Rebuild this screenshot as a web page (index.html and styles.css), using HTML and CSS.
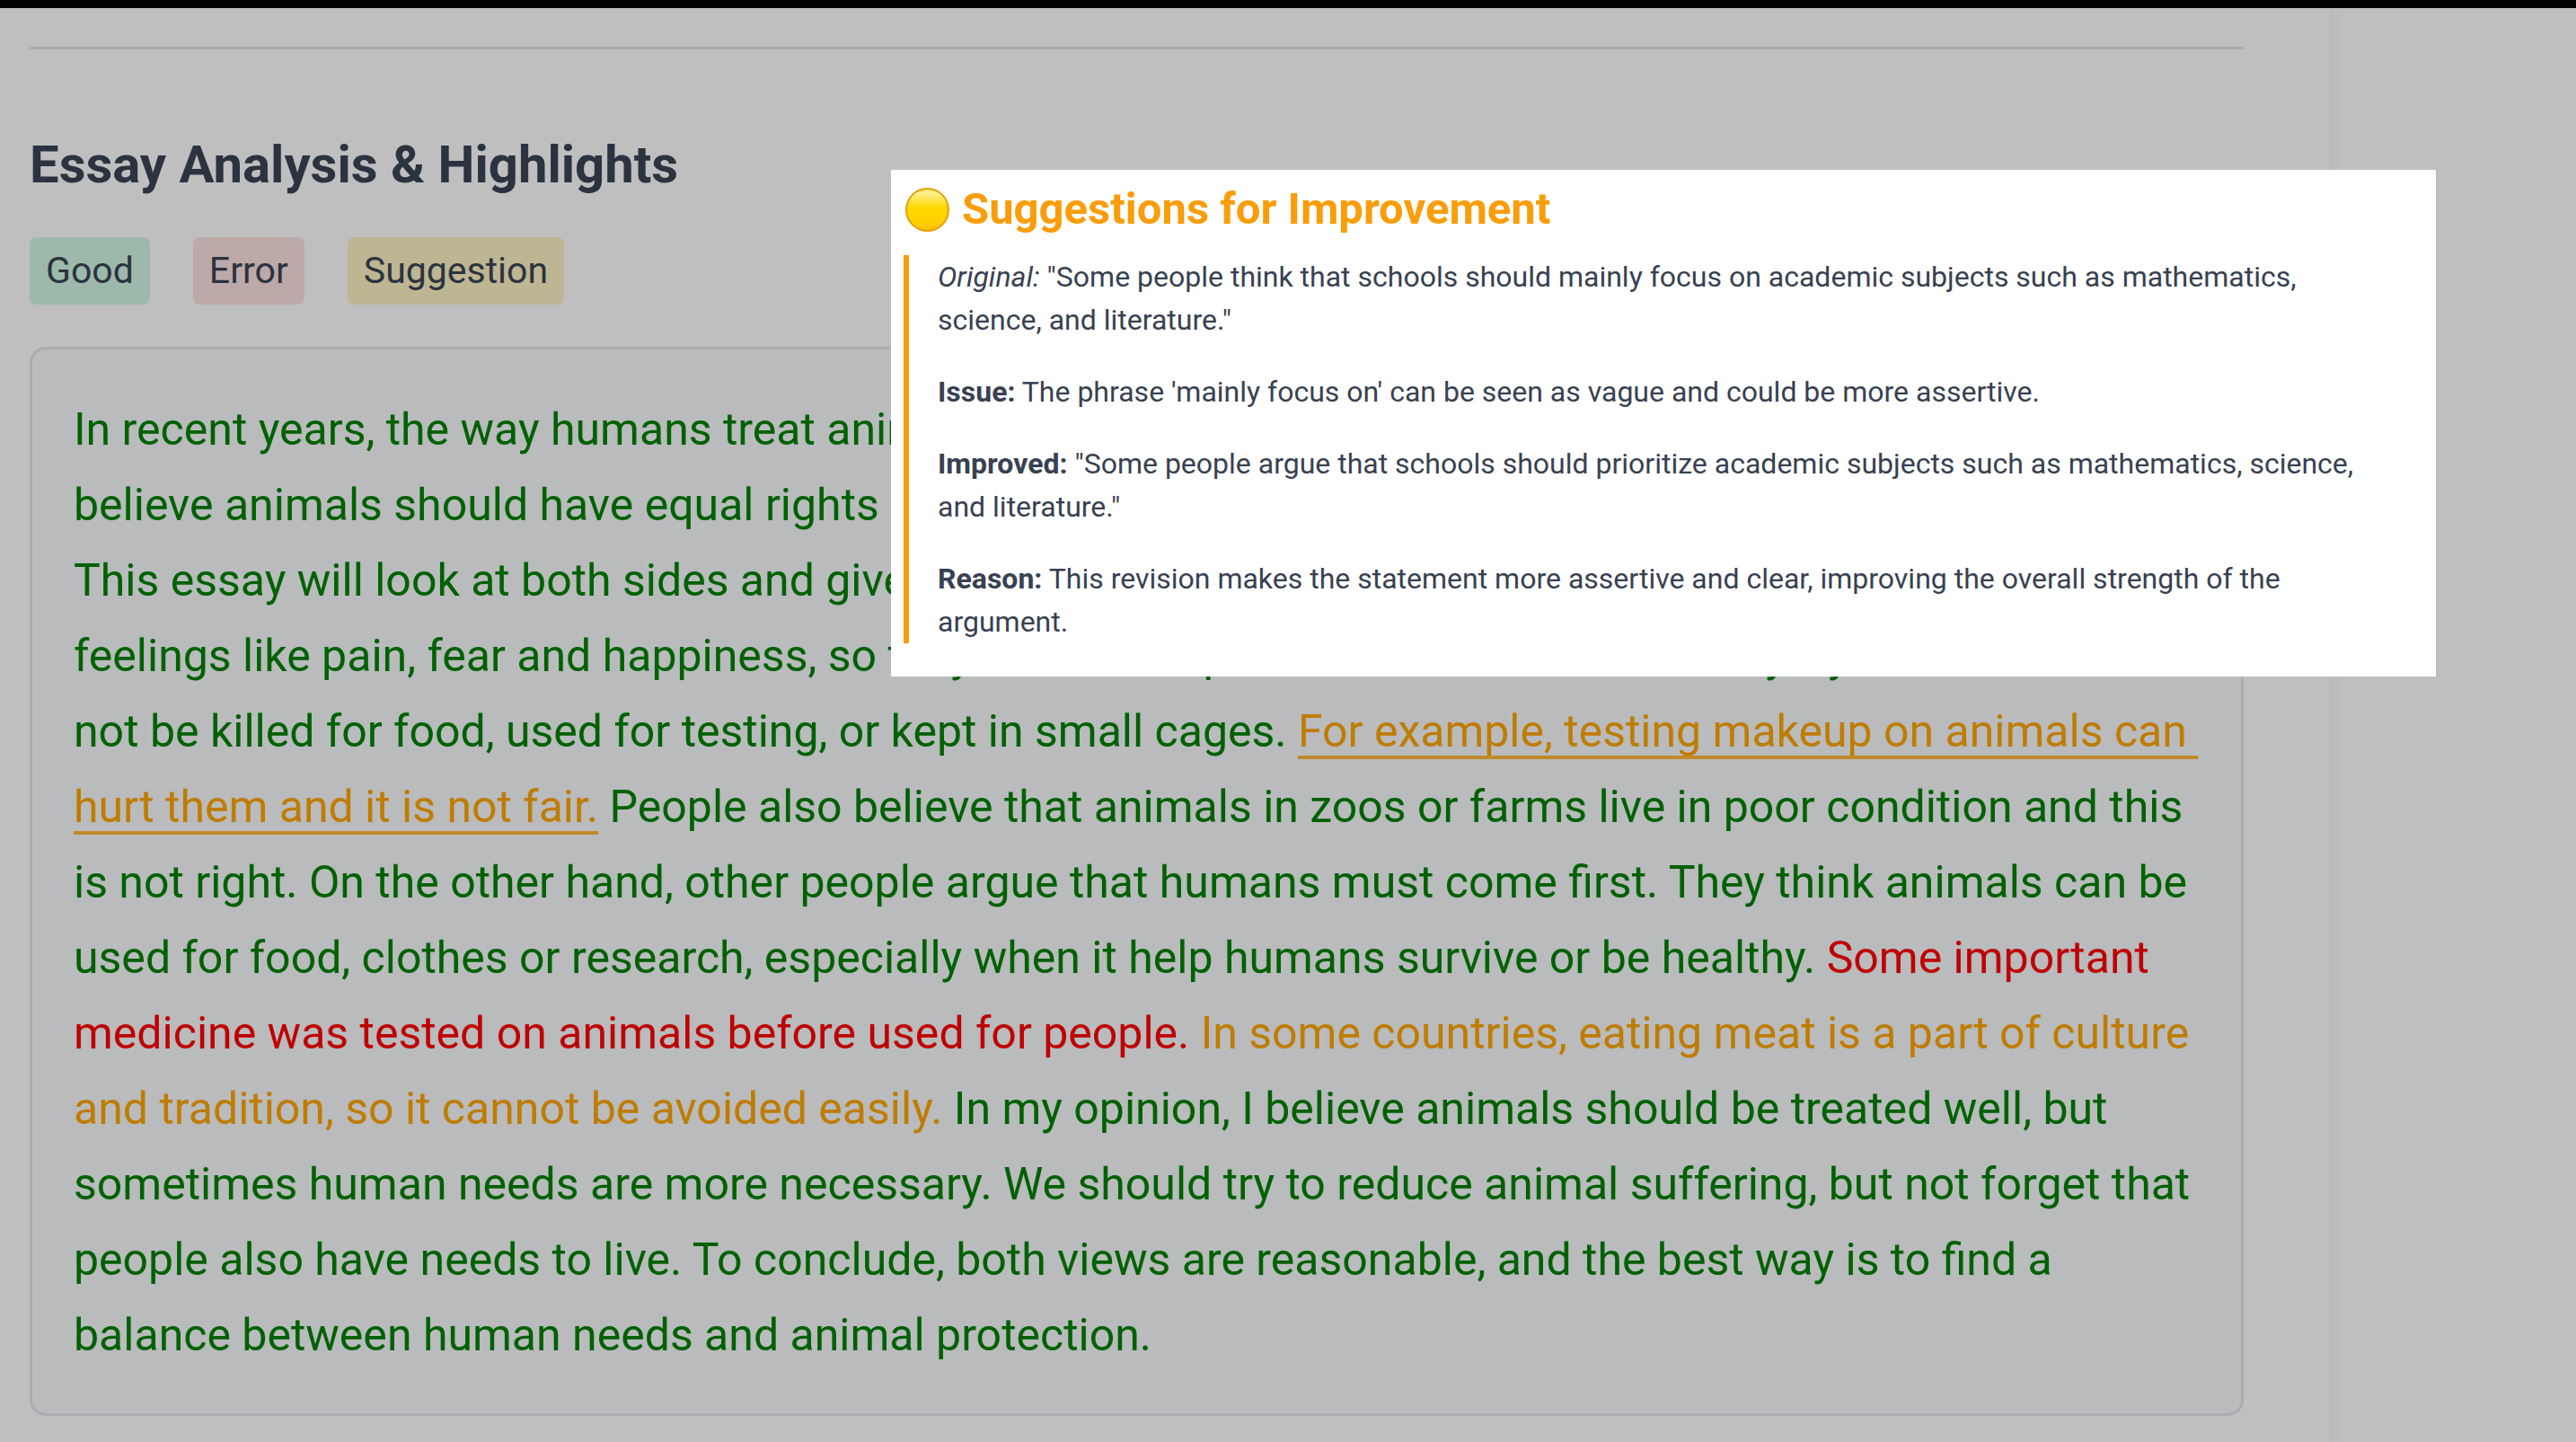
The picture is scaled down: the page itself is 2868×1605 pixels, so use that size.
FILE: index.html
```html
<!DOCTYPE html>
<html lang="en">
<head>
<meta charset="utf-8">
<meta name="viewport" content="width=device-width, initial-scale=1">
<title>Essay Analysis &amp; Highlights</title>
<link rel="stylesheet" href="styles.css">
</head>
<body>
<div class="page">
  <main class="report">
    <hr class="divider">
    <h1 class="title">Essay Analysis &amp; Highlights</h1>
    <ul class="legend">
      <li class="tag tag-good">Good</li>
      <li class="tag tag-error">Error</li>
      <li class="tag tag-suggestion">Suggestion</li>
    </ul>
    <div class="essay-wrap">
      <p class="essay">
        <span class="good">In recent years, the way humans treat animals<br>
        believe animals should have equal rights as<br>
        This essay will look at both sides and give<br>
        feelings like pain, fear and happiness, so they need to be protected from harm. So they try<br>
        not be killed for food, used for testing, or kept in small cages.</span>
        <span class="suggestion active">For example, testing makeup on animals can&nbsp;<br>
        hurt them and it is not fair.</span>
        <span class="good">People also believe that animals in zoos or farms live in poor condition and this<br>
        is not right. On the other hand, other people argue that humans must come first. They think animals can be<br>
        used for food, clothes or research, especially when it help humans survive or be healthy.</span>
        <span class="error">Some important<br>
        medicine was tested on animals before used for people.</span>
        <span class="suggestion">In some countries, eating meat is a part of culture<br>
        and tradition, so it cannot be avoided easily.</span>
        <span class="good">In my opinion, I believe animals should be treated well, but<br>
        sometimes human needs are more necessary. We should try to reduce animal suffering, but not forget that<br>
        people also have needs to live. To conclude, both views are reasonable, and the best way is to find a<br>
        balance between human needs and animal protection.</span>
      </p>
      <aside class="popover" aria-labelledby="popover-title">
        <h2 class="popover-title" id="popover-title">
          <svg class="dot" viewBox="0 0 48 48" aria-hidden="true">
            <defs>
              <linearGradient id="face" x1="0" y1="0" x2="0" y2="1">
                <stop offset="0" stop-color="#ffe85e"/>
                <stop offset="0.1" stop-color="#fff08f"/>
                <stop offset="0.45" stop-color="#ffd900"/>
                <stop offset="0.75" stop-color="#ffd200"/>
                <stop offset="1" stop-color="#f9c000"/>
              </linearGradient>
            </defs>
            <circle cx="24" cy="24" r="23" fill="url(#face)" stroke="#e5a10c" stroke-width="2"/>
          </svg>
          Suggestions for Improvement
        </h2>
        <div class="detail">
          <p><em>Original:</em> "Some people think that schools should mainly focus on academic subjects such as mathematics, science, and literature."</p>
          <p><strong>Issue:</strong> The phrase 'mainly focus on' can be seen as vague and could be more assertive.</p>
          <p><strong>Improved:</strong> "Some people argue that schools should prioritize academic subjects such as mathematics, science, and literature."</p>
          <p><strong>Reason:</strong> This revision makes the statement more assertive and clear, improving the overall strength of the argument.</p>
        </div>
      </aside>
    </div>
  </main>
</div>
</body>
</html>
```
FILE: styles.css
```css
* {
  box-sizing: border-box;
}

body {
  margin: 0;
  background: #bfbfbf;
  color: #2b3340;
  font-family: Roboto, "Liberation Sans", sans-serif;
}

h1, h2, p, ul {
  margin: 0;
  padding: 0;
}

.page {
  min-height: 100vh;
  display: flex;
  padding-right: 274px;
  border-top: 9px solid #000;
  overflow: hidden;
}

.report {
  flex: 1;
  padding: 43px 96px 28px 33px;
  box-shadow: 0 0 12px #b2b2b2;
}

.divider {
  height: 3px;
  margin: 0;
  border: 0;
  background: #abacb1;
}

.title {
  margin-top: 94px;
  font-size: 58px;
  font-weight: 700;
  line-height: 68px;
}

.legend {
  display: flex;
  gap: 48px;
  margin-top: 47px;
  list-style: none;
}

.tag {
  padding: 0 18px;
  border-radius: 8px;
  font-size: 41px;
  line-height: 75px;
}

.tag-good {
  background: #9db9ab;
}

.tag-error {
  background: #bda9a8;
}

.tag-suggestion {
  background: #beb592;
}

.essay-wrap {
  position: relative;
  margin-top: 47px;
}

.essay {
  padding: 47px 46px 45px;
  border: 3px solid #abacb1;
  border-radius: 18px;
  background: #b9bbbd;
  font-size: 50px;
  line-height: 84px;
  white-space: nowrap;
}

.good {
  color: #006100;
}

.error {
  color: #bf0000;
}

.suggestion {
  color: #bf7c00;
}

.active {
  text-decoration: underline 4px #bf8a2b;
  text-decoration-skip-ink: none;
  text-underline-offset: 10px;
}

/* Sits over the essay card and hangs past its right edge */
.popover {
  position: absolute;
  top: -197px;
  left: 959px;
  right: -214px;
  padding: 14px 60px 37px 14px;
  background: #fff;
  color: #374151;
}

.popover-title {
  display: flex;
  align-items: center;
  gap: 14px;
  padding-left: 2px;
  color: #f99d0a;
  font-size: 49px;
  font-weight: 700;
  line-height: 60px;
}

.dot {
  width: 49px;
  height: 49px;
}

.detail {
  display: grid;
  gap: 32px;
  margin-top: 21px;
  padding-left: 32px;
  border-left: 6px solid #f99d0a;
  font-size: 32px;
  line-height: 48px;
}
```
